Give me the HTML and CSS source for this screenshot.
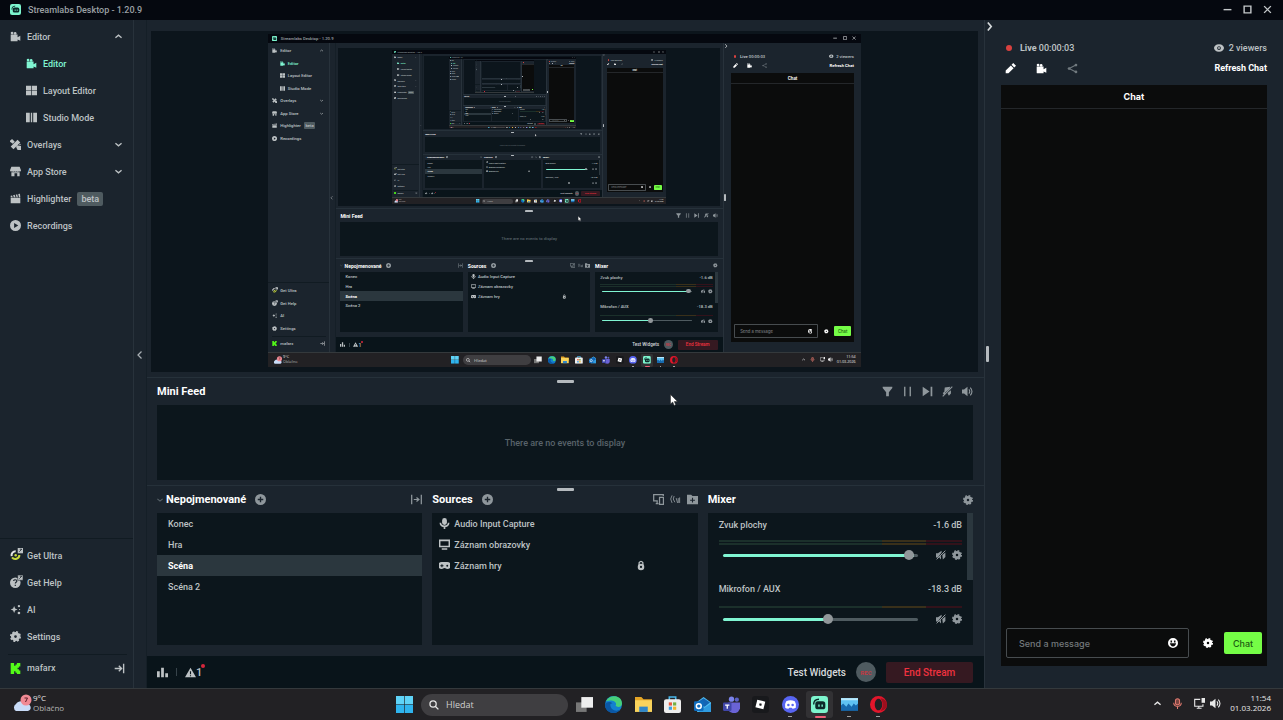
FILE: index.html
```html
<!DOCTYPE html>
<html lang="en">
<head>
    <meta charset="UTF-8">
    <meta name="viewport" content="width=device-width, initial-scale=1.0">
    <title>Streamlabs Desktop</title>
    <link rel="stylesheet" href="styles.css">
</head>
<body>
    <svg class="sprite" width="0" height="0" aria-hidden="true">
        <symbol id="i-camera" viewBox="0 0 16 16"><circle cx="3" cy="3" r="2"/><circle cx="7.500" cy="3.500" r="2"/><path d="M1 5h10v4l4-2v7l-4-1.500V15H2a1 1 0 0 1-1-1z"/></symbol>
        <symbol id="i-grid" viewBox="0 0 16 16"><path d="M0 1h7.500v6.500H0zM8.500 1H16v6.500H8.500zM0 8.500h7.500V15H0zM8.500 8.500H16V15H8.500z"/></symbol>
        <symbol id="i-studio" viewBox="0 0 16 16"><path d="M0 1h5.500v14H0zM7 1h2v14H7zM10.500 1H16v14h-5.500z"/></symbol>
        <symbol id="i-overlays" viewBox="0 0 16 16"><path d="M11 1l4 4L5 15l-4-4zM0 2.500L3 0l4 4-3 3-4-3zM10 9l6 1v6h-5l-2-4z"/><circle cx="14.500" cy="8" r="1"/></symbol>
        <symbol id="i-store" viewBox="0 0 16 16"><path d="M2 1h12l2 5c0 2-2 2.500-3 1.500-1 1-2.500 1-3.300 0-1 1-2.500 1-3.400 0-.8 1-2.300 1-3.300 0C2 8.500 0 8 0 6zM2 9h12v6h-3.500v-4.500h-4V15H2z"/></symbol>
        <symbol id="i-clip" viewBox="0 0 16 16"><path d="M1 7h14v8H1zM1 4l2-.5L4 6H1zM4.500 3.200l2.300-.5L8 6H5.500zM8.300 2.400l2.200-.5L11.500 6h-2zM12 1.600l2.500-.6.5 5h-2z"/></symbol>
        <symbol id="i-play" viewBox="0 0 16 16"><path fill-rule="evenodd" d="M8 0a8 8 0 1 0 0 16A8 8 0 0 0 8 0zM6 4.500L12 8l-6 3.500z"/></symbol>
        <symbol id="i-down" viewBox="0 0 16 16"><path fill="none" stroke="currentColor" stroke-width="3" d="M1 5l7 6 7-6"/></symbol>
        <symbol id="i-up" viewBox="0 0 16 16"><path fill="none" stroke="currentColor" stroke-width="3" d="M1 11l7-6 7 6"/></symbol>
        <symbol id="i-left" viewBox="0 0 16 16"><path fill="none" stroke="currentColor" stroke-width="2.500" d="M11 1L4 8l7 7"/></symbol>
        <symbol id="i-right" viewBox="0 0 16 16"><path fill="none" stroke="currentColor" stroke-width="3" d="M5 1l6 7-6 7"/></symbol>
        <symbol id="i-ultra" viewBox="0 0 16 16"><path fill="none" stroke="#e6e6e6" stroke-width="2.500" d="M7 4a5 5 0 0 0-5 6"/><path fill="none" stroke="#c8d93c" stroke-width="2.500" d="M2.500 11.500a5 5 0 0 0 9-3"/><circle cx="7" cy="9" r="1.500" fill="#c8d93c"/><path d="M9.500 0H16v6.500H9.500z"/><path fill="none" stroke="#1b242d" d="M11.500 4.500l3-3h-2.500"/></symbol>
        <symbol id="i-help" viewBox="0 0 16 16"><circle cx="6.500" cy="9.500" r="6.500"/><path fill="none" stroke="#1b242d" stroke-width="1.400" d="M4.500 7.500c0-2.500 4-2 4 0 0 1.500-2 1.500-2 3M6.500 12v1.500"/><path stroke="#1b242d" stroke-width=".7" d="M9.500 0H16v6.500H9.500z"/><path fill="none" stroke="#1b242d" d="M11.500 4.500l3-3h-2.500"/></symbol>
        <symbol id="i-ai" viewBox="0 0 16 16"><path d="M6 3l1.500 3.500L11 8l-3.500 1.500L6 13l-1.500-3.500L1 8l3.500-1.500z"/><circle cx="13" cy="3" r="1.700"/><circle cx="13" cy="13" r="1.900"/><circle cx="14" cy="8" r=".8"/></symbol>
        <symbol id="i-gear" viewBox="0 0 16 16"><circle cx="8" cy="8" r="4.300" fill="none" stroke="currentColor" stroke-width="4.600"/><circle cx="8" cy="8" r="6.800" fill="none" stroke="currentColor" stroke-width="2.400" stroke-dasharray="2.900 2.440"/></symbol>
        <symbol id="i-kick" viewBox="0 0 16 16"><path fill="#53fc18" d="M1 0h5v4h2V2h2V0h5v5h-2v2h-2v2h2v2h2v5h-5v-2H8v-2H6v4H1z"/></symbol>
        <symbol id="i-exit" viewBox="0 0 16 16"><path fill="none" stroke="currentColor" stroke-width="2" d="M14 1v14M1 8h10M7 4l4 4-4 4"/></symbol>
        <symbol id="i-fold" viewBox="0 0 16 16"><path fill="none" stroke="currentColor" stroke-width="1.800" d="M1 1v14M15 1v14M4 8h7M8 5l3.500 3L8 11"/></symbol>
        <symbol id="i-plus" viewBox="0 0 16 16"><path fill-rule="evenodd" d="M8 0a8 8 0 1 0 0 16A8 8 0 0 0 8 0zM7 4h2v3h3v2H9v3H7V9H4V7h3z"/></symbol>
        <symbol id="i-filter" viewBox="0 0 16 16"><path d="M1 1h14v2L10 9v6H6V9L1 3z"/></symbol>
        <symbol id="i-pause" viewBox="0 0 16 16"><path d="M3 1h2v14H3zM11 1h2v14h-2z"/></symbol>
        <symbol id="i-next" viewBox="0 0 16 16"><path d="M1 1l10 7-10 7zM12.500 1H15v14h-2.500z"/></symbol>
        <symbol id="i-nomusic" viewBox="0 0 16 16"><path d="M4 2l8-1-1 3-8 7zM8 10l5-4v5l-3 3zM1 10l3-2 1 3-2 2z"/><path stroke="currentColor" stroke-width="1.600" d="M1 15L15 1"/></symbol>
        <symbol id="i-sound" viewBox="0 0 16 16"><path d="M0 5h3l5-4v14l-5-4H0z"/><path fill="none" stroke="currentColor" stroke-width="1.600" d="M10 5q2.500 3 0 6M12 2.500q5 5.500 0 11"/></symbol>
        <symbol id="i-mute" viewBox="0 0 16 16"><path d="M0 5h3l6-4v3L3 12H0zM8 9v6l-3-3zM10 8l5-4v7l-4 4z"/><path stroke="currentColor" stroke-width="1.600" d="M1 15L15 1"/></symbol>
        <symbol id="i-screens" viewBox="0 0 16 16"><path fill="none" stroke="currentColor" stroke-width="1.800" d="M15 3V1H1v9h6M4 14h4M6 10v4M9.500 5h5.700v10H9.500z"/></symbol>
        <symbol id="i-wave" viewBox="0 0 16 16"><path fill="none" stroke="currentColor" stroke-width="1.300" d="M3 2q-4 5 0 11M6 3q-3 4 1 9M9 6l2 7M12 6v7M14 5v8"/></symbol>
        <symbol id="i-folder" viewBox="0 0 16 16"><path fill-rule="evenodd" d="M0 1h6l2 2h8v12H0zM7.200 5.500v2.700H4.500v1.600h2.700v2.700h1.600V9.800h2.700V8.200H8.800V5.500z"/></symbol>
        <symbol id="i-mic" viewBox="0 0 16 16"><rect x="4.500" y="0" width="7" height="10" rx="3.500"/><path fill="none" stroke="currentColor" stroke-width="2.400" d="M2 7c0 7 12 7 12 0M8 12v4"/></symbol>
        <symbol id="i-monitor" viewBox="0 0 16 16"><path fill="none" stroke="currentColor" stroke-width="2.200" d="M1 2h14v9H1zM4 14.500h8"/></symbol>
        <symbol id="i-pad" viewBox="0 0 16 16"><path fill-rule="evenodd" d="M4 3h8a4 4 0 0 1 0 10c-2 0-2-1.500-4-1.500S6 13 4 13A4 4 0 0 1 4 3zM3.500 6v1.500H2V9h1.500v1.500H5V9h1.500V7.500H5V6zM12 7a1.400 1.400 0 1 0 0 2.800A1.400 1.400 0 0 0 12 7z"/></symbol>
        <symbol id="i-lock" viewBox="0 0 16 16"><path fill="none" stroke="currentColor" stroke-width="2" d="M5 8V3.500q3-4 6 0V8"/><path fill-rule="evenodd" d="M8 5a5.200 5.200 0 1 0 0 10.500A5.200 5.200 0 0 0 8 5zM8 8.500a1.700 1.700 0 1 1 0 3.500 1.700 1.700 0 0 1 0-3.500z"/></symbol>
        <symbol id="i-bars" viewBox="0 0 16 16"><path d="M0 6h4v9H0zM6 1h4v14H6zM12 9h4v6h-4z"/></symbol>
        <symbol id="i-warn" viewBox="0 0 16 16"><path fill-rule="evenodd" d="M8 1l8 14H0zM7.200 6v4.500h1.600V6zM7.200 12v1.500h1.600V12z"/></symbol>
        <symbol id="i-pencil" viewBox="0 0 16 16"><path d="M12 0l4 4-2.500 2.500-4-4zM8.500 3.500l4 4L5 15H1v-4z"/></symbol>
        <symbol id="i-share" viewBox="0 0 16 16"><path fill="none" stroke="currentColor" stroke-width="1.600" d="M13 3L3 8l10 5"/><circle cx="13" cy="3" r="2"/><circle cx="3" cy="8" r="2"/><circle cx="13" cy="13" r="2"/></symbol>
        <symbol id="i-eye" viewBox="0 0 16 16"><path fill-rule="evenodd" d="M8 2c5 0 8 3.500 8 6s-3 6-8 6-8-3.500-8-6 3-6 8-6zM8 5a3 3 0 1 0 0 6 3 3 0 0 0 0-6z"/><circle cx="8" cy="8" r="1.500"/></symbol>
        <symbol id="i-smile" viewBox="0 0 16 16"><path fill-rule="evenodd" d="M8 0a8 8 0 1 0 0 16A8 8 0 0 0 8 0zM4 4h2.500v3H4zM9.500 4H12v3H9.500zM3 8.500h10q-1 5-5 5t-5-5z"/></symbol>
        <symbol id="i-min" viewBox="0 0 16 16"><path d="M1 7h14v2.500H1z"/></symbol>
        <symbol id="i-max" viewBox="0 0 16 16"><path fill="none" stroke="currentColor" stroke-width="2.500" d="M2 2h12v12H2z"/></symbol>
        <symbol id="i-close" viewBox="0 0 16 16"><path stroke="currentColor" stroke-width="2.500" d="M2 2l12 12M14 2L2 14"/></symbol>
        <symbol id="i-slabs" viewBox="0 0 16 16"><rect width="16" height="16" rx="3" fill="#7df5ce"/><path fill="none" stroke="#0c2a2a" stroke-width="1.300" d="M2.500 8q0-5 5-5"/><rect x="4" y="5" width="9.500" height="7.500" rx="2.500" fill="#0c2a2a"/><path stroke="#7df5ce" stroke-width="1.300" d="M7.500 8v2M10.500 8v2"/></symbol>
        <symbol id="i-search" viewBox="0 0 16 16"><circle cx="6.500" cy="6.500" r="5" fill="none" stroke="currentColor" stroke-width="2"/><path stroke="currentColor" stroke-width="2.200" d="M10 10l5 5"/></symbol>
        <symbol id="i-win" viewBox="0 0 16 16"><path fill="#5fd3f7" d="M0 0h7.700v7.700H0zM8.300 0H16v7.700H8.300z"/><path fill="#2fb4ee" d="M0 8.300h7.700V16H0zM8.300 8.300H16V16H8.300z"/></symbol>
        <symbol id="i-tasks" viewBox="0 0 16 16"><path fill="#777" d="M0 6h10v9H0z"/><path fill="#eee" d="M5 1h11v10H5z"/></symbol>
        <symbol id="i-edge" viewBox="0 0 16 16"><circle cx="8" cy="8" r="8" fill="#1380d0"/><path fill="#46cf7b" d="M1 5C4-2 16-1 16 7c0 4-5 4-6 2 2-3-3-6-9-4z"/><path fill="#0b57a4" d="M5 8c0 5 5 7 9 5-4 6-14 3-14-5 1-3 6-3 7-1-1 0-2 0-2 1z"/></symbol>
        <symbol id="i-files" viewBox="0 0 16 16"><path fill="#e5a526" d="M0 1h6l2 2h8v6H0z"/><path fill="#f9d35c" d="M0 4h16v11H0z"/><path fill="#2f86c8" d="M4 10h8v5H4z"/></symbol>
        <symbol id="i-shop" viewBox="0 0 16 16"><path fill="none" stroke="#49b6ea" stroke-width="1.500" d="M5 4V1h6v3"/><rect y="3" width="16" height="13" rx="2" fill="#eee"/><path fill="#e9573d" d="M4.500 6h3v3h-3z"/><path fill="#74b043" d="M8.500 6h3v3h-3z"/><path fill="#3c9fe0" d="M4.500 10h3v3h-3z"/><path fill="#f2b632" d="M8.500 10h3v3h-3z"/></symbol>
        <symbol id="i-outlook" viewBox="0 0 16 16"><path fill="#51bdf0" d="M2 6l7-5 7 5v9H3z"/><path fill="#1465b4" d="M3 6l6-4 6 4-5 4z"/><path fill="#2f9be0" d="M16 7v8H4z"/><rect y="5" width="9" height="9" rx="1" fill="#0f6cbd"/><circle cx="4.500" cy="9.500" r="2.300" fill="none" stroke="#fff" stroke-width="1.400"/></symbol>
        <symbol id="i-teams" viewBox="0 0 16 16"><circle cx="8" cy="3" r="2.500" fill="#7b83eb"/><circle cx="13" cy="3.500" r="2" fill="#5b62c4"/><path fill="#6a63d6" d="M5 6h11v6q-2 5-7 4-4-1-4-4z"/><rect y="6" width="8" height="8" rx="1" fill="#4046a8"/><path fill="#fff" d="M2 8h4v1.200H4.600V12H3.400V9.200H2z"/></symbol>
        <symbol id="i-roblox" viewBox="0 0 16 16"><rect width="16" height="16" rx="3" fill="#18191c"/><path fill="#fff" fill-rule="evenodd" d="M5 3.500l7.500 1.800-1.800 7.200-7.500-1.800zM7.200 6.800l-.5 2 2 .5.5-2z"/></symbol>
        <symbol id="i-discord" viewBox="0 0 16 16"><circle cx="8" cy="8" r="8" fill="#5865f2"/><path fill="#fff" d="M4 5q4-2 8 0 2 3 1 6-2 1-3 1l-1-1H7l-1 1q-2 0-3-1-1-3 1-6z"/><circle cx="6" cy="8.500" r="1.200" fill="#5865f2"/><circle cx="10" cy="8.500" r="1.200" fill="#5865f2"/></symbol>
        <symbol id="i-photo" viewBox="0 0 16 16"><path fill="#1769ad" d="M0 2h16v12H0z"/><path fill="#5fc2f2" d="M0 2h16v5l-2 2-2-2-2 3-3-3-2 3-3-3-2 2z"/><path fill="#b9e8fb" d="M0 2h16v2H0z"/></symbol>
        <symbol id="i-opera" viewBox="0 0 16 16"><path fill="#e3162b" fill-rule="evenodd" d="M8 0a8 8 0 1 0 0 16A8 8 0 0 0 8 0zM8 2.500c2 0 3.500 2.500 3.500 5.500S10 13.500 8 13.500 4.500 11 4.500 8 6 2.500 8 2.500z"/><path fill="#9c0f1e" d="M10 2q6 1 6 6t-6 6q4-6 0-12z"/></symbol>
        <symbol id="i-cloud" viewBox="0 0 20 18"><path fill="#c9dcf8" d="M4 17a4 4 0 0 1 0-7 6 6 0 0 1 10 0 3.500 3.500 0 0 1 2 7z"/><circle cx="14" cy="6" r="5.500" fill="#f08a94"/><path fill="none" stroke="#5a1c26" d="M12.500 4h3l-2 4"/></symbol>
        <symbol id="i-traymic" viewBox="0 0 16 16"><rect x="5" y="1" width="6" height="9" rx="3" fill="#7a4541" stroke="#e0796f" stroke-width="1.500"/><path fill="none" stroke="#e0796f" stroke-width="1.500" d="M2.500 7c0 7 11 7 11 0M8 12v4"/></symbol>
        <symbol id="i-net" viewBox="0 0 16 16"><path fill="none" stroke="currentColor" stroke-width="1.600" d="M9 2H1v10h12V9M4 15h7M7 12v3"/><path d="M11 0h5v7h-5z"/></symbol>
    </svg>

    <div class="desktop">
        <header class="titlebar">
            <svg class="icon logo"><use href="#i-slabs"/></svg>
            <span class="app-title">Streamlabs Desktop - 1.20.9</span>
            <button aria-label="Minimize"><svg class="icon"><use href="#i-min"/></svg></button>
            <button aria-label="Maximize"><svg class="icon"><use href="#i-max"/></svg></button>
            <button aria-label="Close"><svg class="icon"><use href="#i-close"/></svg></button>
        </header>

        <div class="app">
            <nav class="sidebar">
                <div class="menu">
                    <a href="#"><svg class="icon"><use href="#i-camera"/></svg>Editor<svg class="icon chevron"><use href="#i-up"/></svg></a>
                    <a href="#" class="sub active"><svg class="icon"><use href="#i-camera"/></svg>Editor</a>
                    <a href="#" class="sub"><svg class="icon"><use href="#i-grid"/></svg>Layout Editor</a>
                    <a href="#" class="sub"><svg class="icon"><use href="#i-studio"/></svg>Studio Mode</a>
                    <a href="#"><svg class="icon"><use href="#i-overlays"/></svg>Overlays<svg class="icon chevron"><use href="#i-down"/></svg></a>
                    <a href="#"><svg class="icon"><use href="#i-store"/></svg>App Store<svg class="icon chevron"><use href="#i-down"/></svg></a>
                    <a href="#"><svg class="icon"><use href="#i-clip"/></svg>Highlighter<span class="beta">beta</span></a>
                    <a href="#"><svg class="icon"><use href="#i-play"/></svg>Recordings</a>
                </div>
                <div class="menu bottom">
                    <a href="#"><svg class="icon big"><use href="#i-ultra"/></svg>Get Ultra</a>
                    <a href="#"><svg class="icon big"><use href="#i-help"/></svg>Get Help</a>
                    <a href="#"><svg class="icon"><use href="#i-ai"/></svg>AI</a>
                    <a href="#"><svg class="icon"><use href="#i-gear"/></svg>Settings</a>
                </div>
                <a href="#" class="user"><svg class="icon"><use href="#i-kick"/></svg>mafarx<svg class="icon exit"><use href="#i-exit"/></svg></a>
            </nav>

            <button class="gutter" aria-label="Collapse left dock"><svg class="icon"><use href="#i-left"/></svg></button>

            <main class="editor">
                <section class="display">
                    <div class="display-inner">
                        <div class="screen"></div>
                    </div>
                </section>

                <section class="panel">
                    <span class="handle"></span>
                    <div class="panel-head">
                        <h2>Mini Feed</h2>
                        <div class="tools wide">
                            <button aria-label="Filter"><svg class="icon"><use href="#i-filter"/></svg></button>
                            <button aria-label="Pause"><svg class="icon"><use href="#i-pause"/></svg></button>
                            <button aria-label="Skip"><svg class="icon"><use href="#i-next"/></svg></button>
                            <button aria-label="Mute media"><svg class="icon"><use href="#i-nomusic"/></svg></button>
                            <button aria-label="Sound"><svg class="icon"><use href="#i-sound"/></svg></button>
                        </div>
                    </div>
                    <div class="box feed">There are no events to display</div>
                </section>

                <section class="panel docks">
                    <span class="handle"></span>
                    <div class="dock">
                        <div class="panel-head">
                            <svg class="icon tiny"><use href="#i-down"/></svg>
                            <h2>Nepojmenované</h2>
                            <button aria-label="Add scene"><svg class="icon"><use href="#i-plus"/></svg></button>
                            <div class="tools"><button aria-label="Transitions"><svg class="icon"><use href="#i-fold"/></svg></button></div>
                        </div>
                        <ul class="box scenes">
                            <li>Konec</li>
                            <li>Hra</li>
                            <li class="selected">Scéna</li>
                            <li>Scéna 2</li>
                        </ul>
                    </div>
                    <div class="dock">
                        <div class="panel-head">
                            <h2>Sources</h2>
                            <button aria-label="Add source"><svg class="icon"><use href="#i-plus"/></svg></button>
                            <div class="tools">
                                <button aria-label="Dual output"><svg class="icon"><use href="#i-screens"/></svg></button>
                                <button aria-label="Audio"><svg class="icon"><use href="#i-wave"/></svg></button>
                                <button aria-label="Add folder"><svg class="icon"><use href="#i-folder"/></svg></button>
                            </div>
                        </div>
                        <ul class="box sources">
                            <li><svg class="icon"><use href="#i-mic"/></svg>Audio Input Capture</li>
                            <li><svg class="icon"><use href="#i-monitor"/></svg>Záznam obrazovky</li>
                            <li><svg class="icon"><use href="#i-pad"/></svg>Záznam hry<svg class="icon lock"><use href="#i-lock"/></svg></li>
                        </ul>
                    </div>
                    <div class="dock">
                        <div class="panel-head">
                            <h2>Mixer</h2>
                            <div class="tools"><button aria-label="Mixer settings"><svg class="icon small"><use href="#i-gear"/></svg></button></div>
                        </div>
                        <div class="box mixer">
                            <div class="channels">
                                <div class="channel">
                                    <div class="channel-name"><span>Zvuk plochy</span><span>-1.6 dB</span></div>
                                    <div class="meters"><i></i><i></i></div>
                                    <div class="channel-row">
                                        <input type="range" aria-label="Zvuk plochy" min="0" max="100" value="98" style="--level: 98%">
                                        <button aria-label="Mute"><svg class="icon small"><use href="#i-mute"/></svg></button>
                                        <button aria-label="Channel settings"><svg class="icon small"><use href="#i-gear"/></svg></button>
                                    </div>
                                </div>
                                <div class="channel">
                                    <div class="channel-name"><span>Mikrofon / AUX</span><span>-18.3 dB</span></div>
                                    <div class="meters"><i></i></div>
                                    <div class="channel-row">
                                        <input type="range" aria-label="Mikrofon / AUX" min="0" max="100" value="54" style="--level: 54%">
                                        <button aria-label="Mute"><svg class="icon small"><use href="#i-mute"/></svg></button>
                                        <button aria-label="Channel settings"><svg class="icon small"><use href="#i-gear"/></svg></button>
                                    </div>
                                </div>
                            </div>
                            <div class="scrollbar"></div>
                        </div>
                    </div>
                </section>

                <footer class="status">
                    <svg class="icon stats"><use href="#i-bars"/></svg>
                    <span class="divider"></span>
                    <span class="alerts"><svg class="icon"><use href="#i-warn"/></svg>1</span>
                    <button class="test">Test Widgets</button>
                    <button class="rec">REC</button>
                    <button class="end">End Stream</button>
                </footer>
            </main>

            <aside class="live">
                <button class="collapse" aria-label="Collapse chat"><svg class="icon"><use href="#i-right"/></svg></button>
                <span class="side-handle"></span>
                <div class="live-row">
                    <span class="dot"></span><span><b>Live</b> 00:00:03</span>
                    <span class="viewers"><svg class="icon small"><use href="#i-eye"/></svg>2 viewers</span>
                </div>
                <div class="live-row actions">
                    <button aria-label="Edit stream info"><svg class="icon"><use href="#i-pencil"/></svg></button>
                    <button aria-label="Camera"><svg class="icon"><use href="#i-camera"/></svg></button>
                    <button aria-label="Share" class="dim"><svg class="icon"><use href="#i-share"/></svg></button>
                    <button class="refresh">Refresh Chat</button>
                </div>
                <div class="chat">
                    <h3>Chat</h3>
                    <div class="messages"></div>
                    <form class="chat-form">
                        <label class="message">
                            <input type="text" aria-label="Send a message" placeholder="Send a message">
                            <svg class="icon small"><use href="#i-smile"/></svg>
                        </label>
                        <button type="button" class="chat-gear" aria-label="Chat settings"><svg class="icon small"><use href="#i-gear"/></svg></button>
                        <button type="button" class="send">Chat</button>
                    </form>
                </div>
            </aside>
        </div>

        <div class="taskbar">
            <div class="weather">
                <svg class="cloud"><use href="#i-cloud"/></svg>
                <div>9°C<br><span>Oblačno</span></div>
            </div>
            <div class="start">
                <svg class="icon"><use href="#i-win"/></svg>
                <label class="search"><svg class="icon small"><use href="#i-search"/></svg><input type="text" aria-label="Hledat" placeholder="Hledat"></label>
                <div class="apps">
                    <svg class="icon"><use href="#i-tasks"/></svg>
                    <svg class="icon"><use href="#i-edge"/></svg>
                    <svg class="icon"><use href="#i-files"/></svg>
                    <svg class="icon"><use href="#i-shop"/></svg>
                    <svg class="icon"><use href="#i-outlook"/></svg>
                    <svg class="icon"><use href="#i-teams"/></svg>
                    <svg class="icon"><use href="#i-roblox"/></svg>
                    <span class="running"><svg class="icon"><use href="#i-discord"/></svg></span>
                    <span class="running current"><svg class="icon"><use href="#i-slabs"/></svg></span>
                    <span class="running"><svg class="icon"><use href="#i-photo"/></svg></span>
                    <span class="running"><svg class="icon"><use href="#i-opera"/></svg></span>
                </div>
            </div>
            <div class="tray">
                <svg class="icon arrow"><use href="#i-up"/></svg>
                <svg class="icon"><use href="#i-traymic"/></svg>
                <div class="tray-pair"><svg class="icon"><use href="#i-net"/></svg><svg class="icon"><use href="#i-sound"/></svg></div>
                <div class="clock">11:54<br>01.03.2026</div>
            </div>
        </div>

        <svg class="cursor" viewBox="0 0 8 12"><path fill="#fff" stroke="#222" stroke-width=".5" d="M.5.500v9.500l2.200-2 1.500 3.500 1.500-.7L4.300 7.500h3.200z"/></svg>
    </div>

    <script src="script.js"></script>
</body>
</html>
```

FILE: styles.css
```css
* {
    box-sizing: border-box;
}

body {
    margin: 0;
    height: 100vh;
    overflow: hidden;
    background: #1b242d;
    color: #bdc2c4;
    font-family: Roboto, "Liberation Sans", sans-serif;
    font-size: 9px;
    font-weight: 500;
}

.sprite {
    position: absolute;
}

button {
    display: flex;
    align-items: center;
    justify-content: center;
    padding: 0;
    border: 0;
    background: none;
    color: inherit;
    font: inherit;
}

a {
    color: inherit;
    text-decoration: none;
}

h2, h3, ul {
    margin: 0;
    padding: 0;
}

.icon {
    display: block;
    width: 11px;
    height: 11px;
    flex-shrink: 0;
    fill: currentColor;
}

.icon.small {
    width: 10px;
    height: 10px;
}

.desktop {
    position: relative;
    display: grid;
    grid-template-rows: 20px minmax(0, 1fr) 32px;
    height: 100%;
    background: #1b242d;
    overflow: hidden;
}

/* title bar */
.titlebar {
    display: flex;
    align-items: center;
    gap: 11px;
    padding: 0 11px 1px 10px;
    background: #05080f;
    color: #9ba0a4;
}

.app-title {
    flex: 1;
    margin-left: -4px;
}

.titlebar button {
    color: #c4c8ca;
}

.titlebar button .icon {
    width: 9px;
    height: 9px;
}

.app {
    display: grid;
    grid-template-columns: 134px 13px minmax(0, 1fr) 299px;
    min-height: 0;
}

/* sidebar */
.sidebar {
    display: flex;
    flex-direction: column;
    padding-top: 3px;
    border-right: 1px solid #28323b;
}

.menu a, .user {
    display: flex;
    align-items: center;
    gap: 6px;
    height: 27px;
    padding: 0 10px;
}

.menu .sub {
    padding-left: 26px;
}

.menu .active {
    color: #80f5d2;
}

.menu .chevron {
    width: 7px;
    height: 7px;
    margin: 0 1px 0 auto;
}

.beta {
    padding: 2px 4px;
    border-radius: 2px;
    background: #4f5b60;
}

.bottom {
    margin-top: auto;
    padding: 3px 0 4px;
    border-top: 1px solid #111b22;
}

.icon.big {
    width: 13px;
    height: 13px;
    margin: -3px -2px 0 0;
}

.user {
    margin: 0 6px 7px 8px;
    padding: 0 2px;
    border-top: 1px solid #111b22;
}

.exit {
    margin-left: auto;
}

.gutter {
    padding-top: 1px;
    border-right: 1px solid #151f27;
    color: #a9afb3;
}

.gutter .icon {
    width: 8px;
    height: 8px;
}

/* editor */
.editor {
    display: grid;
    grid-template-rows: minmax(0, 1fr) 108px 171px 32px;
    min-width: 0;
    min-height: 0;
}

.display {
    padding: 11px 6px 5px 4px;
    min-height: 0;
}

.display-inner {
    display: flex;
    justify-content: center;
    height: 100%;
    padding: 3px 0 5px;
    background: #0c151c;
}

.screen {
    height: 100%;
    aspect-ratio: 1283 / 720;
    overflow: hidden;
}

.panel {
    position: relative;
    display: flex;
    flex-direction: column;
    padding: 0 11px 5px 10px;
    border-top: 1px solid #26313a;
}

.handle {
    position: absolute;
    top: 2px;
    left: 50%;
    width: 17px;
    height: 3px;
    margin-left: -9px;
    border-radius: 1px;
    background: #b5babe;
}

.panel-head {
    display: flex;
    align-items: center;
    height: 27px;
    gap: 9px;
    flex-shrink: 0;
    color: #8f979c;
}

.panel-head h2 {
    color: #fff;
    font-size: 11px;
    font-weight: 700;
}

.icon.tiny {
    width: 6px;
    height: 6px;
    margin: 0 -6px 0 0;
    color: #59636a;
}

.tools {
    display: flex;
    gap: 6px;
    margin-left: auto;
}

.tools.wide {
    gap: 9px;
}

.box {
    flex: 1;
    min-height: 0;
    background: #0c161c;
}

.feed {
    display: flex;
    align-items: center;
    justify-content: center;
    color: #59636a;
}

.docks {
    display: grid;
    grid-template-columns: repeat(3, minmax(0, 1fr));
    gap: 10px;
    padding-bottom: 11px;
}

.dock {
    display: flex;
    flex-direction: column;
    min-height: 0;
}

.scenes li, .sources li {
    display: flex;
    align-items: center;
    gap: 4px;
    height: 21px;
    padding-left: 11px;
}

.scenes .selected {
    background: #2b373e;
    color: #fff;
    font-weight: 700;
}

.sources li {
    padding-left: 7px;
}

.sources .lock {
    width: 10px;
    margin: 0 52px 0 auto;
}

/* mixer */
.mixer {
    display: flex;
    justify-content: space-between;
}

.channels {
    flex: 1;
    padding: 0 5px 0 11px;
}

.channel {
    height: 64px;
}

.channel-name {
    display: flex;
    align-items: center;
    justify-content: space-between;
    height: 24px;
}

.meters {
    display: flex;
    flex-direction: column;
    justify-content: center;
    gap: 1px;
    height: 11px;
}

.meters i {
    height: 2px;
    background: linear-gradient(to right, #1b302b 67%, #39301a 67% 85%, #32121a 85%);
}

.channel-row {
    display: flex;
    align-items: center;
    gap: 6px;
    height: 14px;
    color: #8f979c;
}

input[type=range] {
    -webkit-appearance: none;
    appearance: none;
    flex: 1;
    min-width: 0;
    height: 11px;
    margin: 0 12px 0 4px;
    background: none;
}

input[type=range]::-webkit-slider-runnable-track {
    height: 3px;
    border-radius: 2px;
    background: linear-gradient(to right, #80f5d2 var(--level), #4f5b60 var(--level));
}

input[type=range]::-webkit-slider-thumb {
    -webkit-appearance: none;
    width: 10px;
    height: 10px;
    margin-top: -4px;
    border-radius: 50%;
    background: #91979a;
}

.scrollbar {
    width: 6px;
    height: 67px;
    background: #2b373e;
}

/* footer */
.status {
    display: flex;
    align-items: center;
    gap: 8px;
    padding: 0 11px 0 10px;
    background: #09141a;
}

.divider {
    width: 1px;
    height: 8px;
    background: #37434a;
}

.alerts {
    position: relative;
    display: flex;
    align-items: center;
    font-size: 11px;
}

.alerts::after {
    content: "";
    position: absolute;
    top: -2px;
    right: -3px;
    width: 4px;
    height: 4px;
    border-radius: 50%;
    background: #d5263c;
}

.test {
    margin-left: auto;
    color: #d6dadc;
}

.rec {
    width: 20px;
    height: 20px;
    margin: 0 2px;
    border-radius: 50%;
    background: #4f5b60;
    color: #c23a44;
    font-size: 6px;
    font-weight: 700;
}

.end {
    width: 87px;
    height: 21px;
    border-radius: 2px;
    background: #351921;
    color: #f0323f;
}

.test, .end {
    font-size: 10px;
}

/* live dock */
.live {
    position: relative;
    display: flex;
    flex-direction: column;
    padding: 18px 16px 22px;
    border-left: 1px solid #28323b;
}

.collapse {
    position: absolute;
    top: 2px;
    left: 0;
    color: #d6dadc;
}

.collapse .icon {
    width: 9px;
    height: 9px;
}

.side-handle {
    position: absolute;
    top: 50%;
    left: 1px;
    width: 3px;
    height: 16px;
    margin-top: -8px;
    border-radius: 1px;
    background: #b5babe;
}

.live-row {
    display: flex;
    align-items: center;
    gap: 8px;
    height: 20px;
    padding-left: 5px;
}

.live-row b {
    font-weight: 700;
}

.dot {
    width: 6px;
    height: 6px;
    border-radius: 50%;
    background: #d9413f;
}

.viewers {
    display: flex;
    align-items: center;
    gap: 5px;
    margin-left: auto;
}

.actions {
    gap: 20px;
    padding-left: 4px;
    color: #fff;
}

.actions .dim {
    color: #70797e;
}

.refresh {
    margin-left: auto;
    font-weight: 700;
}

.chat {
    display: flex;
    flex: 1;
    flex-direction: column;
    margin-top: 7px;
    background: #0b0c0c;
    font-family: Inter, sans-serif;
}

.chat h3 {
    height: 24px;
    border-bottom: 1px solid #24272a;
    color: #fff;
    font-size: 9px;
    font-weight: 700;
    line-height: 24px;
    text-align: center;
}

.messages {
    flex: 1;
}

.chat-form {
    display: flex;
    align-items: center;
    padding: 0 5px 8px;
}

.message {
    display: flex;
    align-items: center;
    flex: 1;
    height: 30px;
    padding: 0 10px 0 12px;
    border: 1px solid #474c4f;
    border-radius: 2px;
    color: #fff;
}

.message input, .search input {
    flex: 1;
    width: 0;
    padding: 0;
    border: 0;
    outline: 0;
    background: none;
    color: #fff;
    font: inherit;
}

.message input::placeholder {
    color: #74797c;
}

.chat-gear {
    margin: 0 11px 0 14px;
    color: #fff;
}

.send {
    width: 38px;
    height: 22px;
    border-radius: 2px;
    background: #75fd46;
    color: #1c5c10;
}

/* taskbar */
.taskbar {
    display: grid;
    grid-template-columns: 1fr auto 1fr;
    align-items: center;
    border-top: 1px solid #34393c;
    background: #222124;
    color: #e8e8e8;
    font-family: "Open Sans", "Noto Sans", sans-serif;
    font-size: 8px;
    line-height: 10px;
}

.weather {
    display: flex;
    align-items: center;
    gap: 1px;
    height: 28px;
    padding-left: 12px;
    align-self: start;
}

.weather span {
    color: #b5b5b5;
}

.cloud {
    width: 20px;
    height: 18px;
}

.start, .apps, .tray, .tray-pair {
    display: flex;
    align-items: center;
}

.start {
    gap: 8px;
    height: 31px;
}

.start .icon {
    width: 17px;
    height: 17px;
}

.search {
    display: flex;
    align-items: center;
    gap: 7px;
    width: 147px;
    height: 22px;
    padding: 0 8px;
    border-radius: 11px;
    background: #3f3e41;
    font-size: 9px;
}

.search .icon.small {
    width: 10px;
    height: 10px;
}

.search input::placeholder {
    color: #d0d0d0;
}

.apps {
    justify-content: space-between;
    width: 311px;
}

.running {
    position: relative;
}

.running::after {
    content: "";
    position: absolute;
    left: 50%;
    bottom: -4px;
    width: 4px;
    height: 1px;
    margin-left: -2px;
    background: #a0a0a0;
}

.current {
    margin: 0 -5px;
    padding: 5px;
    border-radius: 3px;
    background: #323134;
}

.current::after {
    bottom: 0;
    width: 11px;
    height: 2px;
    margin-left: -5px;
    border-radius: 1px;
    background: #ef5f78;
}

.tray {
    justify-content: flex-end;
    gap: 11px;
    height: 28px;
    padding-right: 12px;
    align-self: start;
}

.tray .arrow {
    width: 7px;
    height: 7px;
}

.tray-pair {
    gap: 5px;
    margin-right: -2px;
}

.clock {
    text-align: right;
}

.cursor {
    position: absolute;
    top: 54.7%;
    left: 52.2%;
    width: 8px;
    height: 12px;
}
```

FILE: script.js
```js
// the display capture shows the desktop, so each screen holds a smaller copy of it
const desktop = document.querySelector('.desktop');
const screenBox = document.querySelector('.screen');
const template = desktop.cloneNode(true);
const scale = screenBox.clientHeight / window.innerHeight;

// lettering under a pixel high is left out of the smallest copy
function dropText(node) {
    const walker = document.createTreeWalker(node, NodeFilter.SHOW_TEXT);
    while (walker.nextNode()) walker.currentNode.data = '';
    node.querySelectorAll('input[type=text]').forEach(input => input.placeholder = '');
}

function capture(box, depth) {
    if (depth === 0) return;
    const copy = template.cloneNode(true);
    if (depth === 1) dropText(copy);
    copy.style.zoom = scale;
    copy.inert = true;
    copy.setAttribute('aria-hidden', 'true');
    box.appendChild(copy);
    capture(copy.querySelector('.screen'), depth - 1);
}

capture(screenBox, 4);
```
